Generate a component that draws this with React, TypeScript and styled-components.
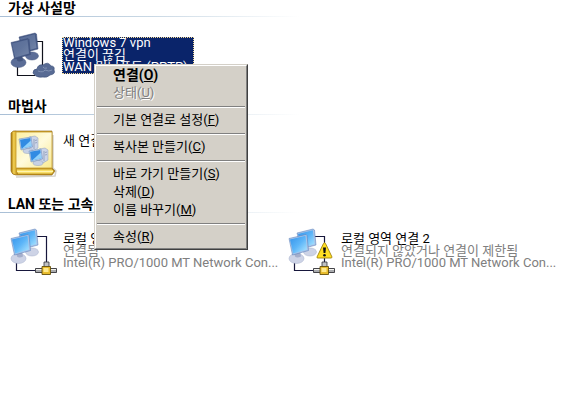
import React, { ReactNode } from 'react';
import styled, { createGlobalStyle, css } from 'styled-components';

const GlobalStyle = createGlobalStyle`
  *, *::before, *::after { box-sizing: border-box; }
  body {
    margin: 0;
    background: #fff;
    color: #000;
    font: 13px/12px Roboto, "Noto Sans CJK KR", sans-serif;
  }
`;

const Window = styled.main`
  position: relative;
  min-height: 100vh;
  overflow: hidden;
`;

const Section = styled.section`
  padding-bottom: 17px;
`;

const Heading = styled.h2`
  margin: 0;
  padding-left: 8px;
  height: 16px;
  font-size: 14px;
  line-height: 16px;
  font-weight: 700;
`;

const Rule = styled.div`
  height: 1px;
  max-width: 300px;
  background: linear-gradient(90deg, #a9bfd6, #c9d8e4 50%, #fff);
`;

const Items = styled.div`
  display: grid;
  grid-template-columns: repeat(auto-fill, minmax(278px, 278px));
  padding: 15px 0 0 8px;
`;

const Item = styled.button`
  display: flex;
  align-items: flex-start;
  gap: 4px;
  height: 49px;
  padding: 0;
  border: 0;
  background: none;
  color: inherit;
  font: inherit;
  text-align: left;
`;

const Icon = styled.svg`
  flex: none;
  width: 50px;
  height: 49px;
`;

const Line = styled.span<{ $muted?: boolean }>`
  display: block;
  color: ${({ $muted }) => ($muted ? '#808080' : 'inherit')};
`;

const Label = styled.span<{ $selected?: boolean }>`
  display: block;
  margin-top: 5px;
  padding: 0 1px 1px;
  white-space: nowrap;
  ${({ $selected }) =>
    $selected &&
    css`
      width: 132px;
      background: #0a246a;
      color: #fff;
      outline: 1px dotted #f5db95;
      outline-offset: -1px;
      ${Line} { color: #fff; }
    `}
`;

const Menu = styled.div`
  position: absolute;
  left: 94px;
  top: 64px;
  width: 154px;
  background: #d4d0c8;
  border: 1px solid;
  border-color: #d4d0c8 #404040 #404040 #d4d0c8;
`;

const MenuFace = styled.div`
  padding: 1px;
  border: 1px solid;
  border-color: #fff #808080 #808080 #fff;
`;

const MenuItem = styled.button<{ $default?: boolean }>`
  display: block;
  width: 100%;
  height: 18px;
  padding: 0 0 2px 16px;
  border: 0;
  background: none;
  color: #000;
  font-family: inherit;
  font-size: ${({ $default }) => ($default ? '14px' : '13px')};
  font-weight: ${({ $default }) => ($default ? 700 : 400)};
  line-height: 16px;
  text-align: left;
  white-space: nowrap;
  &:disabled { color: #808080; text-shadow: 1px 1px 0 #fff; }
`;

const Key = styled.span`
  text-decoration: underline;
  text-underline-offset: 1px;
  text-decoration-thickness: 1px;
`;

const Separator = styled.hr`
  height: 2px;
  margin: 3px 0 4px;
  border: 0;
  border-top: 1px solid #808080;
  border-bottom: 1px solid #fff;
`;

function Monitors({ dim = false, id }: { dim?: boolean; id: string }) {
  const frame = dim ? '#465a86' : '#a9c4e8';
  const edge = dim ? '#3b4d78' : '#5279b4';
  const base = dim ? '#5b6d97' : '#cdd3e6';
  const rim = dim ? '#44567f' : '#a4aecb';
  return (
    <>
      <defs>
        <linearGradient id={id} x1="0" y1="0" x2="1" y2="1">
          <stop offset="0" stopColor={dim ? '#596d98' : '#3593ea'} />
          <stop offset="0.5" stopColor={dim ? '#60749c' : '#5cb5f8'} />
          <stop offset="1" stopColor={dim ? '#7486a9' : '#b5e9ff'} />
        </linearGradient>
      </defs>
      <ellipse cx="24" cy="24" rx="6.500" ry="4" fill={base} stroke={rim} strokeWidth=".5" />
      <path d="M11 5L27 1l1.500 1L30 17l-15 4z" fill={frame} stroke={edge} strokeWidth=".5" />
      <path d="M12 6L26.800 2.300 28.500 16l-13 3.800z" fill={`url(#${id})`} />
      <ellipse cx="10.500" cy="30.500" rx="7.500" ry="5" fill={base} stroke={rim} strokeWidth=".5" />
      <path d="M8 24l6-1.500 1 6q-4 2-6 0z" fill={rim} />
      <path d="M3 10.500L20 6.500l1 1L22.500 22.500 6.500 27z" fill={frame} stroke={edge} strokeWidth=".5" />
      <path d="M4 11.500L19.500 7.800 21 21.500 7.200 25.500z" fill={`url(#${id})`} />
    </>
  );
}

function VpnIcon() {
  return (
    <Icon viewBox="0 0 50 49" aria-hidden="true">
      <path d="M29 9.500h5.500V34M9.500 34v9.500H27" fill="none" stroke="#10121c" strokeWidth="1.200" />
      <Monitors dim id="vpn-screen" />
      <path d="M25 41q0-4 4-4 1-5 6-4 5-4 8 1 4 0 3 4 2 4-4 5-3 3-7 2-7 1-10-4z" fill="#586b94" stroke="#41537d" strokeWidth=".7" />
      <path d="M30 39q5 2 7-1 4 2 7 0M35 35q1 2 4 1" fill="none" stroke="#8292b3" strokeWidth="1" />
    </Icon>
  );
}

function LanIcon({ id, warning }: { id: string; warning?: boolean }) {
  return (
    <Icon viewBox="0 0 50 49" aria-hidden="true">
      <path d="M29 8.500h9.500V36M8.500 34v8.500H27" fill="none" stroke="#17173c" strokeWidth="1.200" />
      <Monitors id={id} />
      <path d="M36 34h5v5h-5z" fill="#bfc1c4" stroke="#34343a" strokeWidth=".8" />
      <path d="M27.500 40.500h21v4h-21z" fill="#a9abae" stroke="#34343a" strokeWidth=".9" />
      <path d="M28 41.500h20" stroke="#f3f3ee" />
      <path d="M34 38.500h8.500v8H34z" fill="#e8bc2d" stroke="#66500b" strokeWidth=".9" />
      <path d="M35.500 40h5v4h-5z" fill="#ffe98b" />
      {warning && (
        <g>
          <path d="M37.500 15.500q1-1.500 2 0L46 29q0 1-1 1H32q-1.500 0-1-1z" fill="#ffdf24" stroke="#a3830c" strokeWidth=".9" strokeLinejoin="round" />
          <path d="M37 19.500h3l-.6 5.500h-1.800z" fill="#111" />
          <circle cx="38.500" cy="27.300" r="1.300" fill="#111" />
        </g>
      )}
    </Icon>
  );
}

function Computer({ x, y }: { x: number; y: number }) {
  return (
    <g transform={`translate(${x} ${y})`}>
      <path d="M10 1l6-1 3 2v10l-5 3-4-2z" fill="#cbd4e8" stroke="#8f9cba" strokeWidth=".5" />
      <path d="M15 3v10M16 4.500l2-.5M16 7l2-.5" stroke="#8390ad" strokeWidth=".7" />
      <ellipse cx="9" cy="15" rx="5" ry="2.500" fill="#c7d1e5" stroke="#92a1bf" strokeWidth=".5" />
      <path d="M0 3l12-2 1.500 10L2 14z" fill="#c3d6ef" stroke="#5b80b8" strokeWidth=".5" />
      <path d="M1 3.800L11.300 2l1.200 8.300-10 2.500z" fill="#318be3" />
      <path d="M3 12.500L11.800 4.500l.7 5.800z" fill="#8fd0fa" />
    </g>
  );
}

function WizardIcon() {
  return (
    <Icon viewBox="0 0 50 49" aria-hidden="true">
      <defs>
        <linearGradient id="cover" x1="0" y1="0" x2="1" y2="1">
          <stop offset="0" stopColor="#fdf0a0" />
          <stop offset=".5" stopColor="#fffbdc" />
          <stop offset="1" stopColor="#fae98e" />
        </linearGradient>
        <linearGradient id="spine">
          <stop offset="0" stopColor="#9c6c08" />
          <stop offset=".4" stopColor="#f6d455" />
          <stop offset="1" stopColor="#a97408" />
        </linearGradient>
      </defs>
      <path d="M8 47l39-1 1-5-3-3V5" fill="none" stroke="#d5d2ca" strokeWidth="1.500" />
      <path d="M3 3q2-3 6-2h35v37l3 3-3 4H8q-4 0-5-4z" fill="#d6a324" stroke="#805b0d" strokeWidth=".6" />
      <path d="M8 39h36l2 2-2 3H9z" fill="#f9df68" stroke="#a4770f" strokeWidth=".7" />
      <path d="M9 41.500h36" stroke="#fff4af" />
      <path d="M8 2h36v36H8z" fill="url(#cover)" stroke="#c39b2b" strokeWidth=".8" />
      <path d="M3 3q2-2 5-1v37l2 5q-6 1-7-4z" fill="url(#spine)" />
      <Computer x={11} y={6} />
      <Computer x={21} y={18} />
    </Icon>
  );
}

interface ConnectionProps {
  icon: ReactNode;
  lines: string[];
  selected?: boolean;
}

function Connection({ icon, lines, selected }: ConnectionProps) {
  return (
    <Item type="button">
      {icon}
      <Label $selected={selected}>
        {lines.map((line, index) => (
          <Line key={line} $muted={index > 0}>{line}</Line>
        ))}
      </Label>
    </Item>
  );
}

function Group({ title, children }: { title: string; children: ReactNode }) {
  return (
    <Section>
      <Heading>{title}</Heading>
      <Rule />
      <Items>{children}</Items>
    </Section>
  );
}

interface Command {
  text: string;
  shortcut: string;
  isDefault?: boolean;
  disabled?: boolean;
}

const commandGroups: Command[][] = [
  [
    { text: '연결', shortcut: 'O', isDefault: true },
    { text: '상태', shortcut: 'U', disabled: true },
  ],
  [{ text: '기본 연결로 설정', shortcut: 'F' }],
  [{ text: '복사본 만들기', shortcut: 'C' }],
  [
    { text: '바로 가기 만들기', shortcut: 'S' },
    { text: '삭제', shortcut: 'D' },
    { text: '이름 바꾸기', shortcut: 'M' },
  ],
  [{ text: '속성', shortcut: 'R' }],
];

function ContextMenu() {
  return (
    <Menu role="menu">
      <MenuFace>
        {commandGroups.map((group, index) => (
          <React.Fragment key={group[0].shortcut}>
            {index > 0 && <Separator />}
            {group.map(({ text, shortcut, isDefault, disabled }) => (
              <MenuItem key={shortcut} type="button" role="menuitem" $default={isDefault} disabled={disabled}>
                {text}(<Key>{shortcut}</Key>)
              </MenuItem>
            ))}
          </React.Fragment>
        ))}
      </MenuFace>
    </Menu>
  );
}

export default function App() {
  return (
    <>
      <GlobalStyle />
      <Window>
        <Group title="가상 사설망">
          <Connection selected icon={<VpnIcon />} lines={['Windows 7 vpn', '연결이 끊김', 'WAN 미니포트 (PPTP)']} />
        </Group>
        <Group title="마법사">
          <Connection icon={<WizardIcon />} lines={['새 연결 마법사']} />
        </Group>
        <Group title="LAN 또는 고속 인터넷">
          <Connection icon={<LanIcon id="lan-one" />} lines={['로컬 영역 연결', '연결됨', 'Intel(R) PRO/1000 MT Network Con...']} />
          <Connection
            icon={<LanIcon id="lan-two" warning />}
            lines={['로컬 영역 연결 2', '연결되지 않았거나 연결이 제한됨', 'Intel(R) PRO/1000 MT Network Con...']}
          />
        </Group>
        <ContextMenu />
      </Window>
    </>
  );
}
